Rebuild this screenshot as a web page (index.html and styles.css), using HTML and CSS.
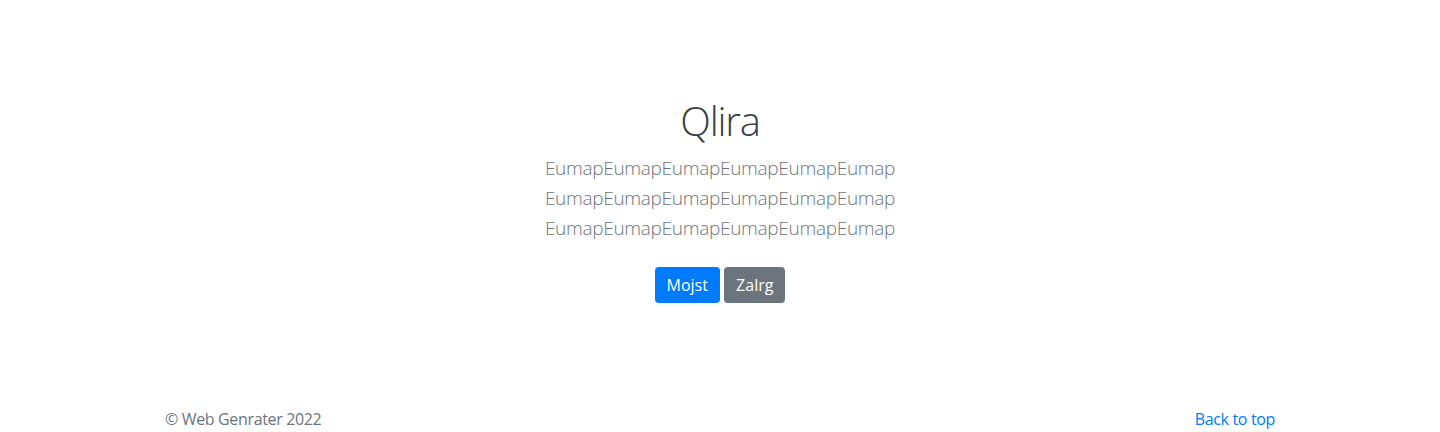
FILE: index.html
```html
<!DOCTYPE html>
<html lang="en">
<head>
<meta charset="utf-8">
<title>Qlira</title>
<link rel="stylesheet" href="styles.css">
</head>
<body>
<main>
  <section class="hero">
    <div class="hero-inner">
      <h1 class="hero-title">Qlira</h1>
      <p class="lead">EumapEumapEumapEumapEumapEumap EumapEumapEumapEumapEumapEumap EumapEumapEumapEumapEumapEumap</p>
      <p class="actions">
        <a href="#" class="btn btn-primary">Mojst</a>
        <a href="#" class="btn btn-secondary">Zalrg</a>
      </p>
    </div>
  </section>
</main>
<footer class="footer">
  <div class="container">
    <p class="back"><a href="#">Back to top</a></p>
    <p class="copy">© Web Genrater 2022</p>
  </div>
</footer>
</body>
</html>
```
FILE: styles.css
```css
*, *::before, *::after { box-sizing: border-box; }
html, body { margin: 0; padding: 0; }
body {
  font-family: "Open Sans", "Liberation Sans", sans-serif;
  font-size: 16px;
  line-height: 1.5;
  color: #212529;
  background: #fff;
}
.hero {
  padding: 97px 0 48px;
  text-align: center;
}
.hero-inner {
  max-width: 640px;
  margin: 0 auto;
  padding: 0 15px;
}
.hero-title {
  margin: 0 0 8px;
  font-size: 40px;
  font-weight: 300;
  line-height: 48px;
  letter-spacing: -1.2px;
  color: #3a3f44;
}
.lead {
  margin: 0 0 16px;
  font-size: 19px;
  font-weight: 300;
  line-height: 30px;
  letter-spacing: -0.3px;
  color: #6c757d;
}
.actions { margin: 0; }
.btn {
  display: inline-block;
  margin: 8px 0;
  padding: 6px 12px;
  font-size: 16px;
  line-height: 24px;
  border-radius: 4px;
  color: #fff;
  text-decoration: none;
  vertical-align: middle;
}
.btn-primary { background: #007bff; }
.btn-secondary { background: #6c757d; }
.footer {
  padding: 48px 0 0;
  color: #6c757d;
}
.container {
  max-width: 1140px;
  margin: 0 auto;
  padding: 0 15px;
}
.container::after { content: ""; display: table; clear: both; }
.footer p { margin: 0; letter-spacing: -0.35px; }
.back { float: right; }
.back a { color: #007bff; text-decoration: none; }
```
